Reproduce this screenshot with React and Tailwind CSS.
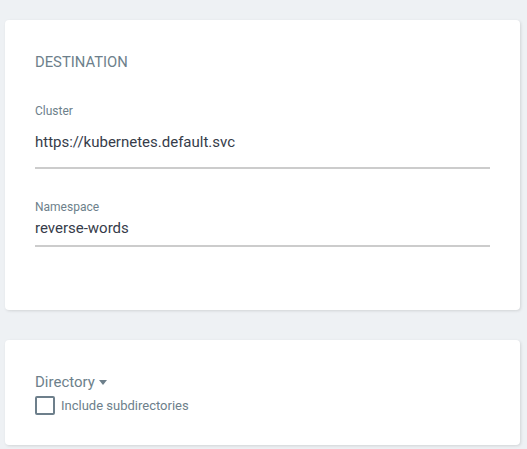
import React from "react";

export default function App() {
  return (
    <div className="min-h-[449px] w-full bg-[#eef1f4] pl-[5px] pr-[7px] pt-[20px] pb-[4px]" style={{ fontFamily: "Roboto, 'Liberation Sans', sans-serif" }}>
      <div className="flex h-[290px] flex-col rounded-[4px] bg-white px-[30px] pt-[32px] shadow-[1px_1px_3px_rgba(0,0,0,0.12)]">
        <div className="text-[14.8px] leading-[20px] text-[#6d7f8b]">DESTINATION</div>
        <div className="mt-[31px] w-[455px]">
          <div className="text-[12px] leading-[16px] text-[#6d7f8b]">Cluster</div>
          <div className="mt-[13px] text-[15px] leading-[20px] text-[#363c4a]">https://kubernetes.default.svc</div>
          <div className="mt-[15px] h-[2px] bg-[#cccccc]" />
        </div>
        <div className="mt-[30px] w-[455px]">
          <div className="text-[12px] leading-[16px] text-[#6d7f8b]">Namespace</div>
          <div className="mt-[3px] text-[15px] leading-[20px] text-[#363c4a]">reverse-words</div>
          <div className="mt-[7px] h-[2px] bg-[#cccccc]" />
        </div>
      </div>
      <div className="mt-[30px] flex h-[105px] flex-col rounded-[4px] bg-white px-[30px] pt-[32px] shadow-[1px_1px_3px_rgba(0,0,0,0.12)]">
        <div className="flex items-center text-[15px] leading-[20px] text-[#6d7f8b]">
          <span>Directory</span>
          <svg className="ml-[4px]" width="8" height="5" viewBox="0 0 8 5">
            <path d="M0 0 L8 0 L4 5 Z" fill="#6d7f8b" />
          </svg>
        </div>
        <div className="mt-[4px] flex items-center">
          <div className="h-[19px] w-[20px] rounded-[2px] border-2 border-[#6d7f8b]" />
          <span className="ml-[6px] text-[13px] leading-[16px] text-[#6d7f8b]">Include subdirectories</span>
        </div>
      </div>
    </div>
  );
}
